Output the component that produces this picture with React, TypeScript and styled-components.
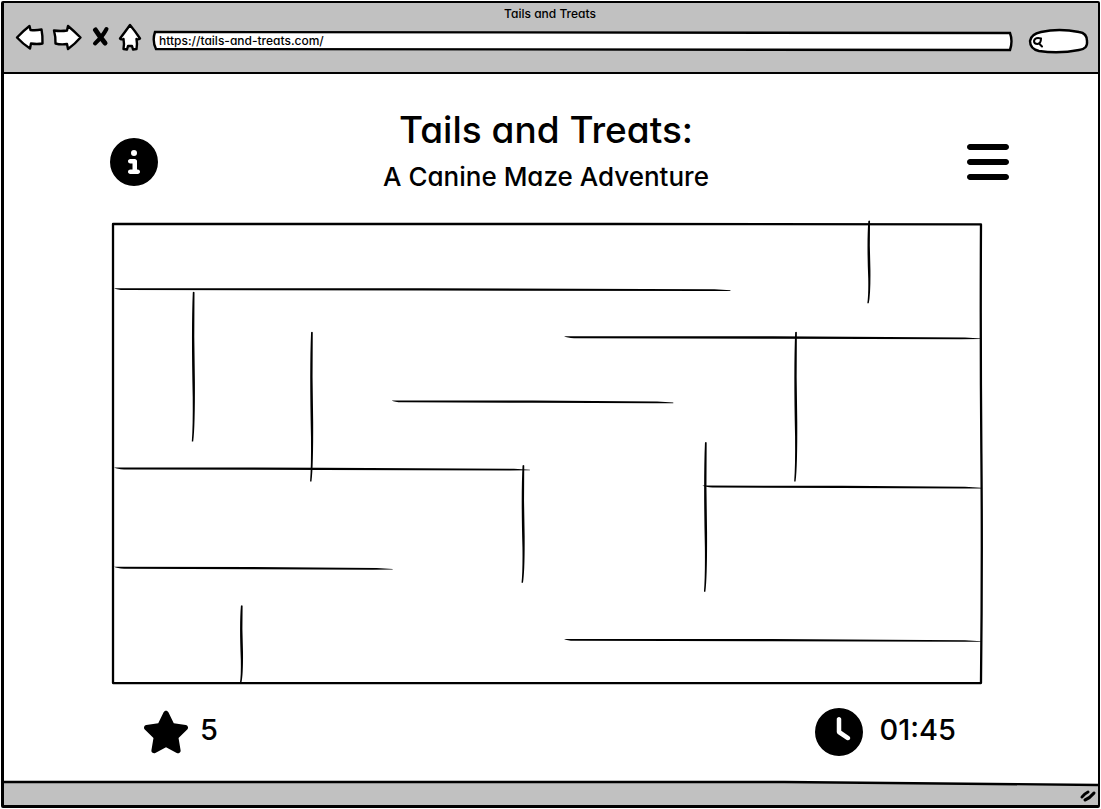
import React from "react";
import styled, { createGlobalStyle } from "styled-components";
import { FaBars, FaCircleInfo, FaClock, FaStar } from "react-icons/fa6";

const GlobalStyle = createGlobalStyle`
  * { box-sizing: border-box; }
  body {
    margin: 0;
    background: #fff;
    color: #000;
    font-family: "Inter", "Liberation Sans", sans-serif;
    font-feature-settings: "cv11" 1;
    font-weight: 500;
  }
`;

const Frame = styled.div`
  display: flex;
  flex-direction: column;
  min-height: 100vh;
  padding: 1px 1px 1px 1px;
`;

const Win = styled.div`
  flex: 1;
  display: flex;
  flex-direction: column;
  border: 2px solid #000;
  border-left-width: 3px;
  border-bottom-width: 3px;
  border-radius: 2px;
`;

const Chrome = styled.header`
  background: #c1c1c1;
  border-bottom: 2px solid #000;
  height: 71px;
`;

const WindowTitle = styled.div`
  font-size: 12px;
  line-height: 16px;
  padding: 3px 2px 0 0;
  text-align: center;
`;

const Toolbar = styled.div`
  display: flex;
  align-items: center;
  height: 38px;
  padding: 0 10px 0 12px;
`;

const NavButtons = styled.nav`
  display: flex;
  align-items: center;
  gap: 9px;
  margin: -8px 12px 0 0;
`;

const NavButton = styled.button<{ $width: number }>`
  display: block;
  width: ${(p) => p.$width}px;
  height: 28px;
  padding: 0;
  border: 0;
  background: none;
  cursor: pointer;
  svg { display: block; overflow: visible; }
`;

const Field = styled.label<{ $fixed?: number }>`
  position: relative;
  display: flex;
  flex: ${(p) => (p.$fixed ? `0 0 ${p.$fixed}px` : "1")};
  min-width: 0;
  height: ${(p) => (p.$fixed ? 24 : 20)}px;
  margin-left: ${(p) => (p.$fixed ? 16 : 0)}px;
`;

const FieldOutline = styled.svg`
  position: absolute;
  inset: 0;
  width: 100%;
  height: 100%;
  overflow: visible;
  path { fill: #fff; stroke: #000; stroke-width: 2.4px; vector-effect: non-scaling-stroke; }
`;

const TextInput = styled.input<{ $indent: number }>`
  position: relative;
  width: 100%;
  padding: 0 6px 0 ${(p) => p.$indent}px;
  border: 0;
  outline: 0;
  background: none;
  color: #000;
  font: inherit;
  font-feature-settings: inherit;
  font-size: 12px;
  line-height: 20px;
`;

const Magnifier = styled.svg`
  position: absolute;
  left: 4px;
  top: 8px;
`;

const Content = styled.main`
  flex: 1;
  padding: 32px 116px 20px 106px;
`;

const Masthead = styled.div`
  display: flex;
  justify-content: space-between;
  align-items: flex-start;
  margin-right: -30px;
`;

const IconButton = styled.button`
  display: block;
  margin-top: 32px;
  padding: 0;
  border: 0;
  background: none;
  color: #000;
  font-size: 48px;
  line-height: 0;
  cursor: pointer;
`;

const Titles = styled.div`
  text-align: center;
  margin-right: 30px;
`;

const Title = styled.h1`
  margin: 0;
  font-size: 37px;
  font-weight: 500;
  line-height: 48px;
`;

const Subtitle = styled.h2`
  margin: 0;
  font-size: 26px;
  font-weight: 500;
  line-height: 46px;
`;

const Maze = styled.svg`
  display: block;
  width: calc(100% - 2px);
  height: auto;
  margin: 23px 0 0 2px;
  overflow: visible;
`;

const Stats = styled.div`
  display: flex;
  justify-content: space-between;
  padding: 24px 26px 0 32px;
`;

const Stat = styled.div<{ $gap: number }>`
  display: flex;
  align-items: center;
  gap: ${(p) => p.$gap}px;
  font-size: 29px;
  line-height: 48px;
  svg { font-size: 48px; }
`;

const StatValue = styled.span`
  margin-top: -4px;
`;

const StatusBar = styled.footer`
  position: relative;
  display: flex;
  justify-content: flex-end;
  align-items: center;
  height: 23px;
  padding: 4px 1px 0 0;
`;

const StatusBackground = styled.svg`
  position: absolute;
  inset: 0;
  width: 100%;
  height: 100%;
  overflow: visible;
`;

const Grip = styled.svg`
  position: relative;
`;

type Wall = { x: number; y: number; length: number };

const horizontalWalls: Wall[] = [
  { x: 2, y: 66, length: 615 },
  { x: 451, y: 114, length: 416 },
  { x: 279, y: 178, length: 281 },
  { x: 2, y: 245, length: 415 },
  { x: 589, y: 263, length: 278 },
  { x: 2, y: 344, length: 278 },
  { x: 451, y: 416, length: 416 },
];

const verticalWalls: Wall[] = [
  { x: 755, y: -2, length: 82 },
  { x: 81, y: 69, length: 149 },
  { x: 199, y: 109, length: 149 },
  { x: 682, y: 109, length: 149 },
  { x: 592, y: 219, length: 149 },
  { x: 410, y: 242, length: 117 },
  { x: 129, y: 382, length: 77 },
];

const horizontalPath = ({ x, y, length: n }: Wall) =>
  `M${x} ${y - 1} L${x + n * 0.5} ${y - 0.9} L${x + n - 16} ${y + 0.2} L${x + n} ${y + 1.2}
   L${x + n} ${y + 1.8} L${x + n - 20} ${y + 1.9} L${x + n * 0.5} ${y + 1.4} L${x + 10} ${y + 0.9} Q${x + 3} ${y + 0.6} ${x} ${y - 1}Z`;

const verticalPath = ({ x, y, length: n }: Wall) =>
  `M${x - 0.4} ${y} Q${x + 0.6} ${y - 1} ${x + 1.3} ${y} L${x + 1.1} ${y + n * 0.3} L${x + 1.7} ${y + n * 0.6}
   Q${x + 1.9} ${y + n * 0.9} ${x} ${y + n} L${x - 1.4} ${y + n}
   Q${x - 0.2} ${y + n * 0.9} ${x - 0.5} ${y + n * 0.7} Q${x - 2} ${y + n * 0.25} ${x - 0.4} ${y}Z`;

export default function App() {
  return (
    <Frame>
      <GlobalStyle />
      <Win>
        <Chrome>
          <WindowTitle>Tails and Treats</WindowTitle>
          <Toolbar>
            <NavButtons>
              <NavButton $width={28} aria-label="Back">
                <svg width="28" height="28" viewBox="0 0 28 28" fill="#fff" stroke="#000" strokeWidth="2.4" strokeLinejoin="round">
                  <path d="M1 14.5 Q7 8 13.5 3 L14.5 7 Q20 7.6 25.5 6.5 Q26.8 13 26.5 20.5 Q21 21.5 15 20.5 L14 25.5 Q7 21 1 14.5Z" />
                </svg>
              </NavButton>
              <NavButton $width={28} aria-label="Forward">
                <svg width="28" height="28" viewBox="0 0 28 28" fill="#fff" stroke="#000" strokeWidth="2.4" strokeLinejoin="round">
                  <path d="M1 7.5 Q8 8.5 14 7.5 L15 3 Q21 8 27.5 14.5 Q22 21 15 26 L14 21 Q8 22 2.5 20.5 Q2.8 14 1 7.5Z" />
                </svg>
              </NavButton>
              <NavButton $width={20} aria-label="Stop">
                <svg width="20" height="28" viewBox="0 0 20 28" fill="none" stroke="#000" strokeLinecap="round">
                  <path d="M5.5 7 Q10 14 15 20" strokeWidth="5" />
                  <path d="M16.5 6 Q13 13 5 20.5" strokeWidth="4" />
                </svg>
              </NavButton>
              <NavButton $width={22} aria-label="Home">
                <svg width="22" height="28" viewBox="0 0 22 28" fill="#fff" stroke="#000" strokeWidth="2.4" strokeLinejoin="round">
                  <path d="M11 2 Q16 8 21 15.5 Q19 17 17.5 16 Q18.5 21 17.5 26 L14 26.5 L13 23 L9 23 L8 26.5 L4.5 26 Q5.5 21 4.5 16 Q2 17 1 15.5 Q6 9 11 2Z" />
                </svg>
              </NavButton>
            </NavButtons>
            <Field>
              <FieldOutline viewBox="0 0 860 20" preserveAspectRatio="none" aria-hidden>
                <path d="M2 1 Q430 1 857 2 Q860 10 857 19 Q430 19 3 18 Q-1 10 2 1Z" />
              </FieldOutline>
              <TextInput $indent={6} aria-label="Address" defaultValue="https://tails-and-treats.com/" />
            </Field>
            <Field $fixed={59}>
              <FieldOutline viewBox="0 0 59 24" preserveAspectRatio="none" aria-hidden>
                <path d="M12 3 Q30 -1 50 3 Q58 4 58 12 Q59 20 50 21 Q30 25 10 22 Q1 20 1 12 Q2 5 12 3Z" />
              </FieldOutline>
              <Magnifier width="12" height="12" viewBox="0 0 12 12" fill="none" stroke="#000" strokeWidth="2" strokeLinecap="round" aria-hidden>
                <path d="M8 1.5 Q2 0 1 4 Q1 7 4.5 7 Q8 6.5 8 1.5Z M6 6.5 L9 9.5" />
              </Magnifier>
              <TextInput $indent={18} aria-label="Search" />
            </Field>
          </Toolbar>
        </Chrome>

        <Content>
          <Masthead>
            <IconButton aria-label="Information"><FaCircleInfo /></IconButton>
            <Titles>
              <Title>Tails and Treats:</Title>
              <Subtitle>A Canine Maze Adventure</Subtitle>
            </Titles>
            <IconButton aria-label="Menu"><FaBars /></IconButton>
          </Masthead>

          <Maze viewBox="0 0 868 460" role="img" aria-label="Maze">
            <path d="M1 1 Q300 0.4 500 1 T867 1.4 Q866.4 120 867.4 230 T867 459 Q500 458.4 1 459 Q0.6 300 1 1Z" fill="none" stroke="#000" strokeWidth="2.3" strokeLinejoin="round" />
            {horizontalWalls.map((w) => <path key={`h${w.x}-${w.y}`} d={horizontalPath(w)} />)}
            {verticalWalls.map((w) => <path key={`v${w.x}-${w.y}`} d={verticalPath(w)} />)}
          </Maze>

          <Stats>
            <Stat $gap={10}><FaStar aria-label="Treats" /><StatValue>5</StatValue></Stat>
            <Stat $gap={16}><FaClock aria-label="Time" /><StatValue>01:45</StatValue></Stat>
          </Stats>
        </Content>

        <StatusBar>
          <StatusBackground viewBox="0 0 1094 23" preserveAspectRatio="none" aria-hidden>
            <path d="M0 0 Q400 0 780 0 Q900 1 1094 3 L1094 23 L0 23Z" fill="#c1c1c1" />
            <path d="M0 0 Q400 0 780 0 Q900 1 1094 3" fill="none" stroke="#000" strokeWidth="2.3" vectorEffect="non-scaling-stroke" />
          </StatusBackground>
          <Grip width="18" height="14" viewBox="0 0 18 14" stroke="#000" strokeWidth="3" strokeLinecap="round" fill="none" aria-hidden>
            <path d="M3 8 Q5 5 9 3 M6 11 Q11 9 15 4" />
          </Grip>
        </StatusBar>
      </Win>
    </Frame>
  );
}
